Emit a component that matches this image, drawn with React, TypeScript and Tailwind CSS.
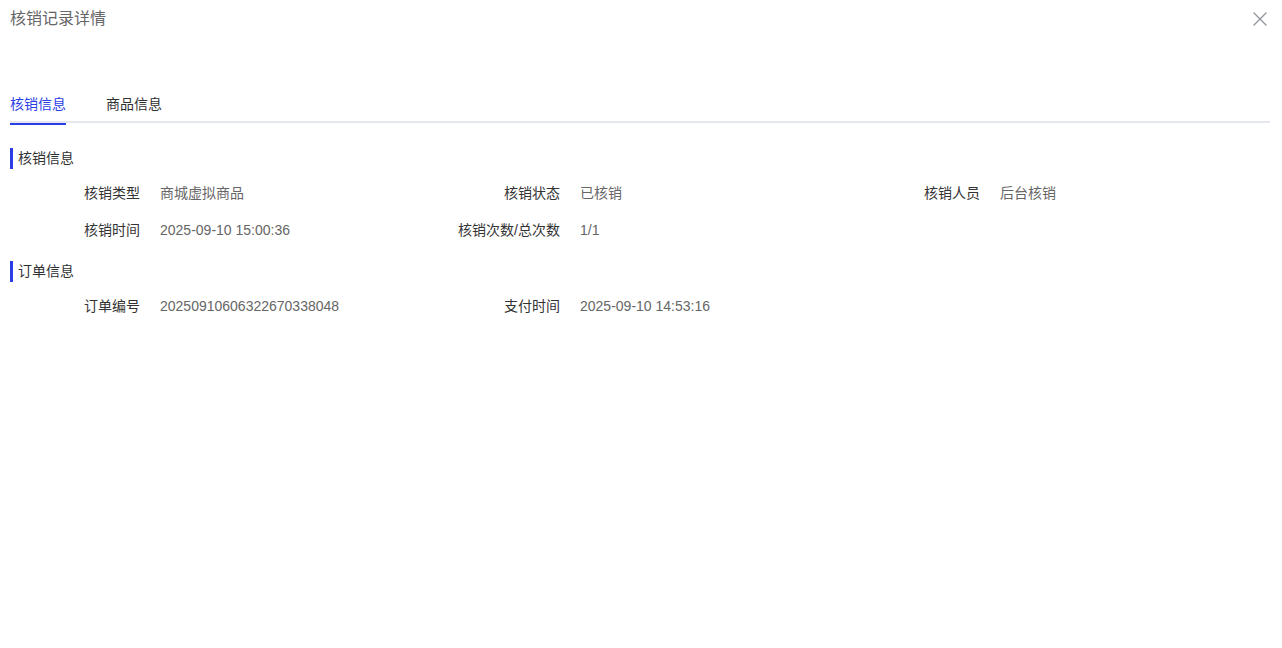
import React, { useState } from "react";

type Item = { label: string; value: string };

const sections: { title: string; rows: Item[][] }[] = [
  {
    title: "核销信息",
    rows: [
      [
        { label: "核销类型", value: "商城虚拟商品" },
        { label: "核销状态", value: "已核销" },
        { label: "核销人员", value: "后台核销" },
      ],
      [
        { label: "核销时间", value: "2025-09-10 15:00:36" },
        { label: "核销次数/总次数", value: "1/1" },
      ],
    ],
  },
  {
    title: "订单信息",
    rows: [
      [
        { label: "订单编号", value: "20250910606322670338048" },
        { label: "支付时间", value: "2025-09-10 14:53:16" },
      ],
    ],
  },
];

const tabs = ["核销信息", "商品信息"];

export default function App() {
  const [active, setActive] = useState(0);

  return (
    <div
      className="w-[1282px] h-[648px] bg-white pl-[10px] pr-[12px] text-[14px]"
      style={{ fontFamily: '"Liberation Sans", "Noto Sans CJK SC", sans-serif' }}
    >
      {/* Header */}
      <div className="flex h-[38px] items-center justify-between">
        <span className="text-[16px] text-[#666666]">核销记录详情</span>
        <button className="mr-[2px] flex h-[16px] w-[16px] items-center justify-center text-[#909399]">
          <svg width="14" height="14" viewBox="0 0 14 14" fill="none">
            <path d="M1 1L13 13M13 1L1 13" stroke="currentColor" strokeWidth="1.3" strokeLinecap="round" />
          </svg>
        </button>
      </div>

      {/* Tabs */}
      <div className="mt-[45px] flex h-[40px] border-b-2 border-[#e4e7ed]">
        {tabs.map((tab, i) => (
          <button
            key={tab}
            onClick={() => setActive(i)}
            className={`relative -mb-[2px] flex h-[42px] items-center ${i === 0 ? "pr-[20px]" : "px-[20px]"} ${
              active === i ? "text-[#2b3ee6]" : "text-[#303133]"
            }`}
          >
            <span className="relative flex h-full items-center">
              {tab}
              {active === i && <span className="absolute bottom-0 left-0 h-[2px] w-full bg-[#2b3ee6]" />}
            </span>
          </button>
        ))}
      </div>

      {/* Sections */}
      <div className="pt-[25px]">
        {sections.map((section, si) => (
          <div key={section.title} className={si > 0 ? "mt-[12px]" : ""}>
            <div className="flex h-[21px] items-center border-l-[3px] border-[#2b3ee6] pl-[5px] text-[#303133]">
              {section.title}
            </div>
            <div className="mt-[6px]">
              {section.rows.map((row, ri) => (
                <div key={ri} className="grid h-[37px] grid-cols-3 items-center">
                  {row.map((item) => (
                    <div key={item.label} className="flex items-center">
                      <span className="w-[130px] shrink-0 text-right text-[#333333]">{item.label}</span>
                      <span className="ml-[20px] text-[#666666]">{item.value}</span>
                    </div>
                  ))}
                </div>
              ))}
            </div>
          </div>
        ))}
      </div>
    </div>
  );
}
